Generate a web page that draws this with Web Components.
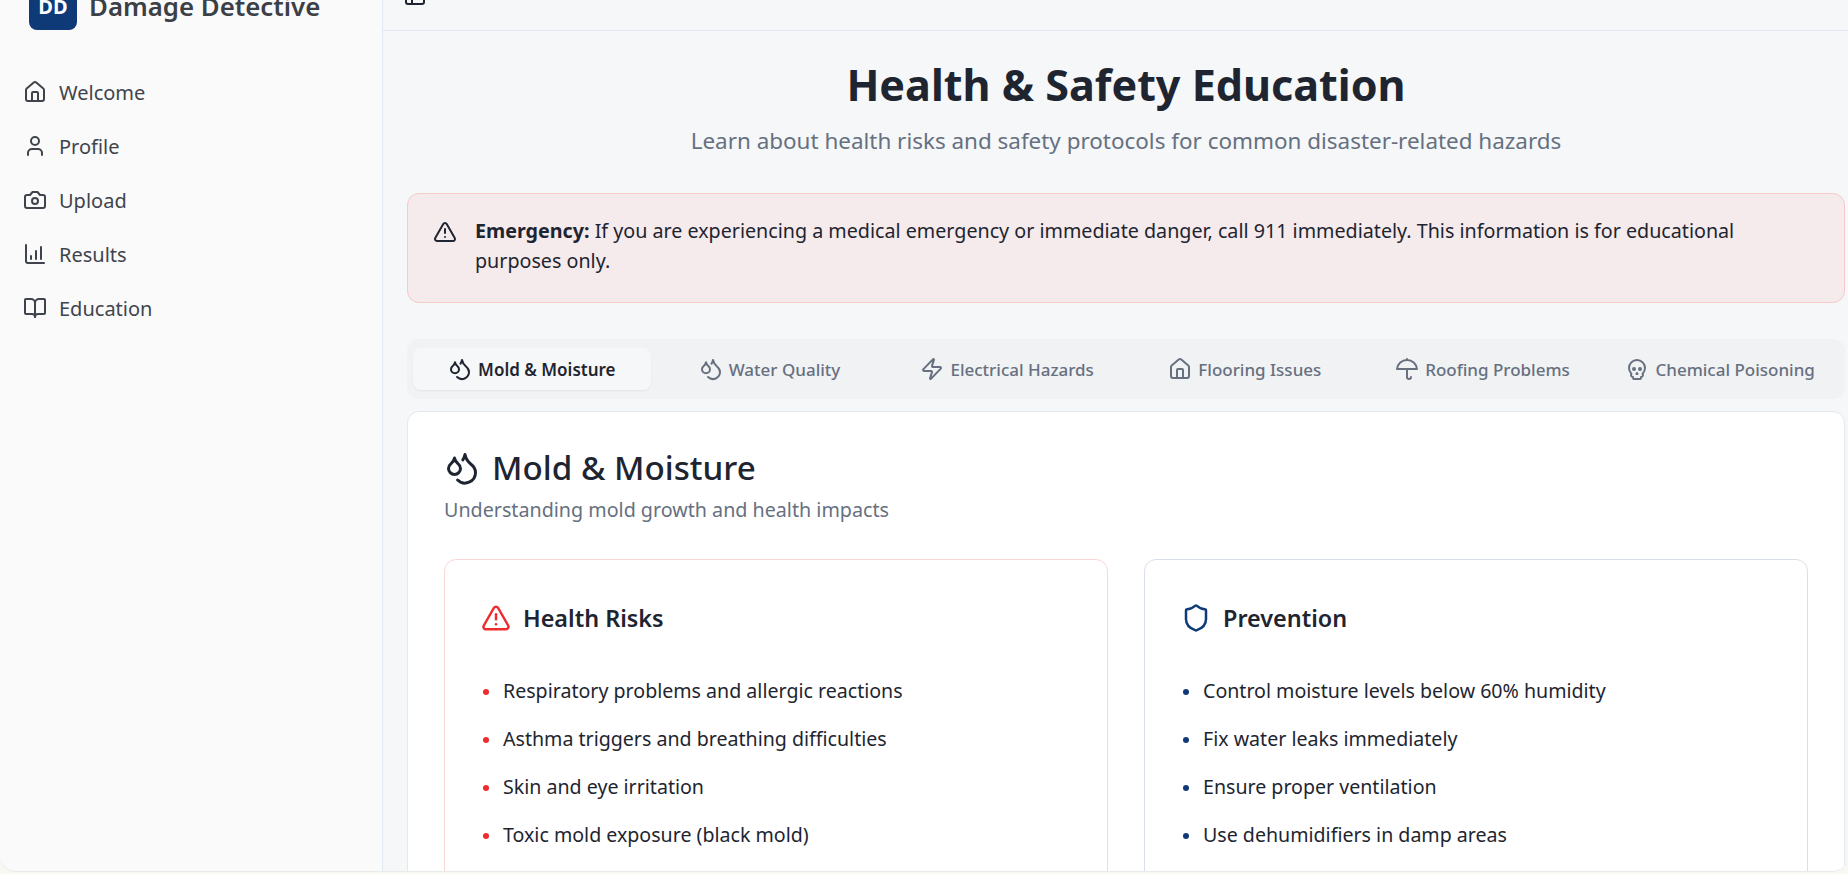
<!DOCTYPE html>
<html>
<head>
<meta charset="utf-8">
<style>
  html, body { margin: 0; height: 100%; overflow: hidden; background: #f8f8f3; }
  body { font-family: "Noto Sans", "Open Sans", sans-serif; color: #1e2530; }
</style>
</head>
<body>
<app-shell>
  <side-bar slot="side">
    <nav-item icon="house">Welcome</nav-item>
    <nav-item icon="user">Profile</nav-item>
    <nav-item icon="camera">Upload</nav-item>
    <nav-item icon="chart">Results</nav-item>
    <nav-item icon="book">Education</nav-item>
  </side-bar>
  <page-head></page-head>
  <alert-box><b>Emergency:</b> If you are experiencing a medical emergency or immediate danger, call 911 immediately. This information is for educational purposes only.</alert-box>
  <tab-bar>
    <tab-item icon="drops" active>Mold &amp; Moisture</tab-item>
    <tab-item icon="drops">Water Quality</tab-item>
    <tab-item icon="zap">Electrical Hazards</tab-item>
    <tab-item icon="house">Flooring Issues</tab-item>
    <tab-item icon="umbrella">Roofing Problems</tab-item>
    <tab-item icon="skull">Chemical Poisoning</tab-item>
  </tab-bar>
  <topic-card heading="Mold &amp; Moisture" sub="Understanding mold growth and health impacts">
    <info-card heading="Health Risks" icon="triangle" tone="#ef2b2d" edge="#fbd6d6">
      <info-row>Respiratory problems and allergic reactions</info-row>
      <info-row>Asthma triggers and breathing difficulties</info-row>
      <info-row>Skin and eye irritation</info-row>
      <info-row>Toxic mold exposure (black mold)</info-row>
    </info-card>
    <info-card heading="Prevention" icon="shield" tone="#0f3a78" edge="#d9dfe8">
      <info-row>Control moisture levels below 60% humidity</info-row>
      <info-row>Fix water leaks immediately</info-row>
      <info-row>Ensure proper ventilation</info-row>
      <info-row>Use dehumidifiers in damp areas</info-row>
    </info-card>
  </topic-card>
</app-shell>

<script>
// lucide style outlines, stroke comes from currentColor
const ICONS = {
  house: '<path d="M15 21v-8a1 1 0 0 0-1-1h-4a1 1 0 0 0-1 1v8"/><path d="M3 10a2 2 0 0 1 .709-1.528l7-5.999a2 2 0 0 1 2.582 0l7 5.999A2 2 0 0 1 21 10v9a2 2 0 0 1-2 2H5a2 2 0 0 1-2-2z"/>',
  user: '<path d="M19 21v-2a4 4 0 0 0-4-4H9a4 4 0 0 0-4 4v2"/><circle cx="12" cy="7" r="4"/>',
  camera: '<path d="M14.5 4h-5L7 7H4a2 2 0 0 0-2 2v9a2 2 0 0 0 2 2h16a2 2 0 0 0 2-2V9a2 2 0 0 0-2-2h-3l-2.5-3z"/><circle cx="12" cy="13" r="3"/>',
  chart: '<path d="M3 3v16a2 2 0 0 0 2 2h16"/><path d="M8 17v-3"/><path d="M13 17V9"/><path d="M18 17V5"/>',
  book: '<path d="M12 7v14"/><path d="M3 18a1 1 0 0 1-1-1V4a1 1 0 0 1 1-1h5a4 4 0 0 1 4 4 4 4 0 0 1 4-4h5a1 1 0 0 1 1 1v13a1 1 0 0 1-1 1h-6a3 3 0 0 0-3 3 3 3 0 0 0-3-3z"/>',
  drops: '<path d="M7 16.3c2.2 0 4-1.83 4-4.05 0-1.16-.57-2.26-1.71-3.19S7.29 6.75 7 5.3c-.29 1.45-1.14 2.84-2.29 3.76S3 11.1 3 12.25c0 2.22 1.8 4.05 4 4.05z"/><path d="M12.56 6.6A10.97 10.97 0 0 0 14 3.02c.5 2.5 2 4.9 4 6.5s3 3.5 3 5.5a6.98 6.98 0 0 1-11.91 4.97"/>',
  zap: '<path d="M4 14a1 1 0 0 1-.78-1.63l9.9-10.2a.5.5 0 0 1 .86.46l-1.92 6.02A1 1 0 0 0 13 10h7a1 1 0 0 1 .78 1.63l-9.9 10.2a.5.5 0 0 1-.86-.46l1.92-6.02A1 1 0 0 0 11 14z"/>',
  umbrella: '<path d="M22 12a10.06 10.06 1 0 0-20 0Z"/><path d="M12 12v8a2 2 0 0 0 4 0"/><path d="M12 2v1"/>',
  skull: '<path d="m12.5 17-.5-1-.5 1h1z"/><path d="M15 22a1 1 0 0 0 1-1v-1a2 2 0 0 0 1.56-3.25 8 8 0 1 0-11.12 0A2 2 0 0 0 8 20v1a1 1 0 0 0 1 1z"/><circle cx="15" cy="12" r="1"/><circle cx="9" cy="12" r="1"/>',
  triangle: '<path d="m21.73 18-8-14a2 2 0 0 0-3.48 0l-8 14A2 2 0 0 0 4 21h16a2 2 0 0 0 1.73-3"/><path d="M12 9v4"/><path d="M12 17h.01"/>',
  shield: '<path d="M20 13c0 5-3.5 7.5-7.66 8.95a1 1 0 0 1-.67-.01C7.5 20.5 4 18 4 13V6a1 1 0 0 1 1-1c2 0 4.5-1.2 6.24-2.72a1.17 1.17 0 0 1 1.52 0C14.51 3.81 17 5 19 5a1 1 0 0 1 1 1z"/>',
  panel: '<rect width="18" height="18" x="3" y="3" rx="2"/><path d="M9 3v18"/>'
};

function svgIcon(name, size) {
  return `<svg width="${size}" height="${size}" viewBox="0 0 24 24" fill="none" stroke="currentColor" stroke-width="2" stroke-linecap="round" stroke-linejoin="round">${ICONS[name]}</svg>`;
}

class AppShell extends HTMLElement {
  constructor() {
    super();
    this.attachShadow({ mode: 'open' });
    this.shadowRoot.innerHTML = `
      <style>
        :host { display: flex; height: 872px; overflow: hidden; background: #f5f7f9; border-radius: 0 0 16px 16px; border-bottom: 1px solid #e9ebe8; box-sizing: border-box; }
        .side { flex: 0 0 383px; box-sizing: border-box; }
        main { flex: 1; min-width: 0; }
        .top { height: 30px; border-bottom: 1px solid #e2e8f0; padding-left: 20px; overflow: hidden; }
        .top svg { display: block; margin-top: -17px; color: #1e2530; }
        .body { padding: 29px 3px 0 24px; }
      </style>
      <div class="side"><slot name="side"></slot></div>
      <main>
        <div class="top">${svgIcon('panel', 24)}</div>
        <div class="body"><slot></slot></div>
      </main>`;
  }
}
customElements.define('app-shell', AppShell);

class SideBar extends HTMLElement {
  constructor() {
    super();
    this.attachShadow({ mode: 'open' });
    this.shadowRoot.innerHTML = `
      <style>
        :host { display: block; height: 100%; background: #fafafa; border-right: 1px solid #e2e8f0; box-sizing: border-box; overflow: hidden; border-bottom-left-radius: 16px; }
        .brand { display: flex; align-items: center; gap: 12px; margin: -18px 0 0 29px; height: 48px; }
        .logo { width: 48px; height: 48px; border-radius: 8px; background: #0f3a78; color: #fff; font-weight: 700; font-size: 20px; display: flex; align-items: center; justify-content: center; }
        .name { font-size: 25.8px; font-weight: 600; color: #3b3f46; white-space: nowrap; }
        nav { display: flex; flex-direction: column; margin-top: 35px; padding-left: 23px; }
      </style>
      <div class="brand"><div class="logo">DD</div><div class="name">Damage Detective</div></div>
      <nav><slot></slot></nav>`;
  }
}
customElements.define('side-bar', SideBar);

class NavItem extends HTMLElement {
  constructor() {
    super();
    this.attachShadow({ mode: 'open' });
  }
  connectedCallback() {
    this.shadowRoot.innerHTML = `
      <style>
        :host { display: flex; align-items: center; gap: 12px; height: 54px; font-size: 20px; color: #3f444c; }
      </style>
      ${svgIcon(this.getAttribute('icon'), 24)}<span><slot></slot></span>`;
  }
}
customElements.define('nav-item', NavItem);

class PageHead extends HTMLElement {
  constructor() {
    super();
    this.attachShadow({ mode: 'open' });
    this.shadowRoot.innerHTML = `
      <style>
        :host { display: block; text-align: center; }
        h1 { margin: 0; font-size: 43.1px; line-height: 50px; font-weight: 700; color: #1e2530; }
        p { margin: 14.5px 0 0; font-size: 22.45px; line-height: 32px; color: #66707f; }
      </style>
      <h1>Health &amp; Safety Education</h1>
      <p>Learn about health risks and safety protocols for common disaster-related hazards</p>`;
  }
}
customElements.define('page-head', PageHead);

class AlertBox extends HTMLElement {
  constructor() {
    super();
    this.attachShadow({ mode: 'open' });
    this.shadowRoot.innerHTML = `
      <style>
        :host { display: flex; gap: 18px; margin-top: 36.5px; padding: 22px 25px; background: #f5eaec; border: 1px solid #f8c9c9; border-radius: 12px; font-size: 19.7px; line-height: 30px; color: #1e2530; box-sizing: border-box; height: 110px; }
        svg { flex: none; margin-top: 4px; }
      </style>
      ${svgIcon('triangle', 24)}<div><slot></slot></div>`;
  }
}
customElements.define('alert-box', AlertBox);

class TabBar extends HTMLElement {
  constructor() {
    super();
    this.attachShadow({ mode: 'open' });
    this.shadowRoot.innerHTML = `
      <style>
        :host { display: grid; grid-template-columns: repeat(6, 1fr); margin-top: 36px; padding: 9px 6px; height: 60px; box-sizing: border-box; background: #f1f2f4; border-radius: 12px; }
      </style>
      <slot></slot>`;
  }
}
customElements.define('tab-bar', TabBar);

class TabItem extends HTMLElement {
  constructor() {
    super();
    this.attachShadow({ mode: 'open' });
  }
  connectedCallback() {
    this.shadowRoot.innerHTML = `
      <style>
        :host { display: flex; align-items: center; justify-content: center; gap: 6px; font-size: 17px; font-weight: 500; color: #66707f; border-radius: 8px; white-space: nowrap; }
        :host([active]) { background: #f6f7f9; color: #1e2530; font-weight: 600; box-shadow: 0 1px 2px rgba(0,0,0,.05); }
      </style>
      ${svgIcon(this.getAttribute('icon'), 24)}<span><slot></slot></span>`;
  }
}
customElements.define('tab-item', TabItem);

class TopicCard extends HTMLElement {
  constructor() {
    super();
    this.attachShadow({ mode: 'open' });
  }
  connectedCallback() {
    this.shadowRoot.innerHTML = `
      <style>
        :host { display: block; margin-top: 12px; padding: 34px 36px 0; background: #fff; border: 1px solid #e2e8f0; border-radius: 12px; box-sizing: border-box; height: 600px; }
        h2 { display: flex; align-items: center; gap: 12px; margin: 0; font-size: 33.2px; line-height: 44px; font-weight: 500; color: #1e2530; }
        p { margin: 6px 0 0; font-size: 19.7px; line-height: 28px; color: #66707f; }
        .cols { display: grid; grid-template-columns: 1fr 1fr; gap: 36px; margin-top: 35px; }
      </style>
      <h2>${svgIcon('drops', 36)}<span>${this.getAttribute('heading')}</span></h2>
      <p>${this.getAttribute('sub')}</p>
      <div class="cols"><slot></slot></div>`;
  }
}
customElements.define('topic-card', TopicCard);

class InfoCard extends HTMLElement {
  constructor() {
    super();
    this.attachShadow({ mode: 'open' });
  }
  connectedCallback() {
    const tone = this.getAttribute('tone');
    this.shadowRoot.innerHTML = `
      <style>
        :host { display: block; padding: 35px 36px; background: #fff; border: 1px solid ${this.getAttribute('edge')}; border-radius: 12px; --dot: ${tone}; height: 400px; box-sizing: border-box; }
        h3 { display: flex; align-items: center; gap: 12px; margin: 0 0 25px; font-size: 23.4px; line-height: 46px; font-weight: 600; color: #1e2530; }
        h3 svg { color: ${tone}; }
        .rows { display: flex; flex-direction: column; }
      </style>
      <h3>${svgIcon(this.getAttribute('icon'), 30)}<span>${this.getAttribute('heading')}</span></h3>
      <div class="rows"><slot></slot></div>`;
  }
}
customElements.define('info-card', InfoCard);

class InfoRow extends HTMLElement {
  constructor() {
    super();
    this.attachShadow({ mode: 'open' });
    this.shadowRoot.innerHTML = `
      <style>
        :host { display: flex; align-items: center; gap: 14px; height: 48px; font-size: 19.6px; color: #1e2530; padding-left: 2px; }
        i { width: 6px; height: 6px; border-radius: 50%; background: var(--dot); flex: none; margin-top: 4px; }
      </style>
      <i></i><span><slot></slot></span>`;
  }
}
customElements.define('info-row', InfoRow);
</script>
</body>
</html>
